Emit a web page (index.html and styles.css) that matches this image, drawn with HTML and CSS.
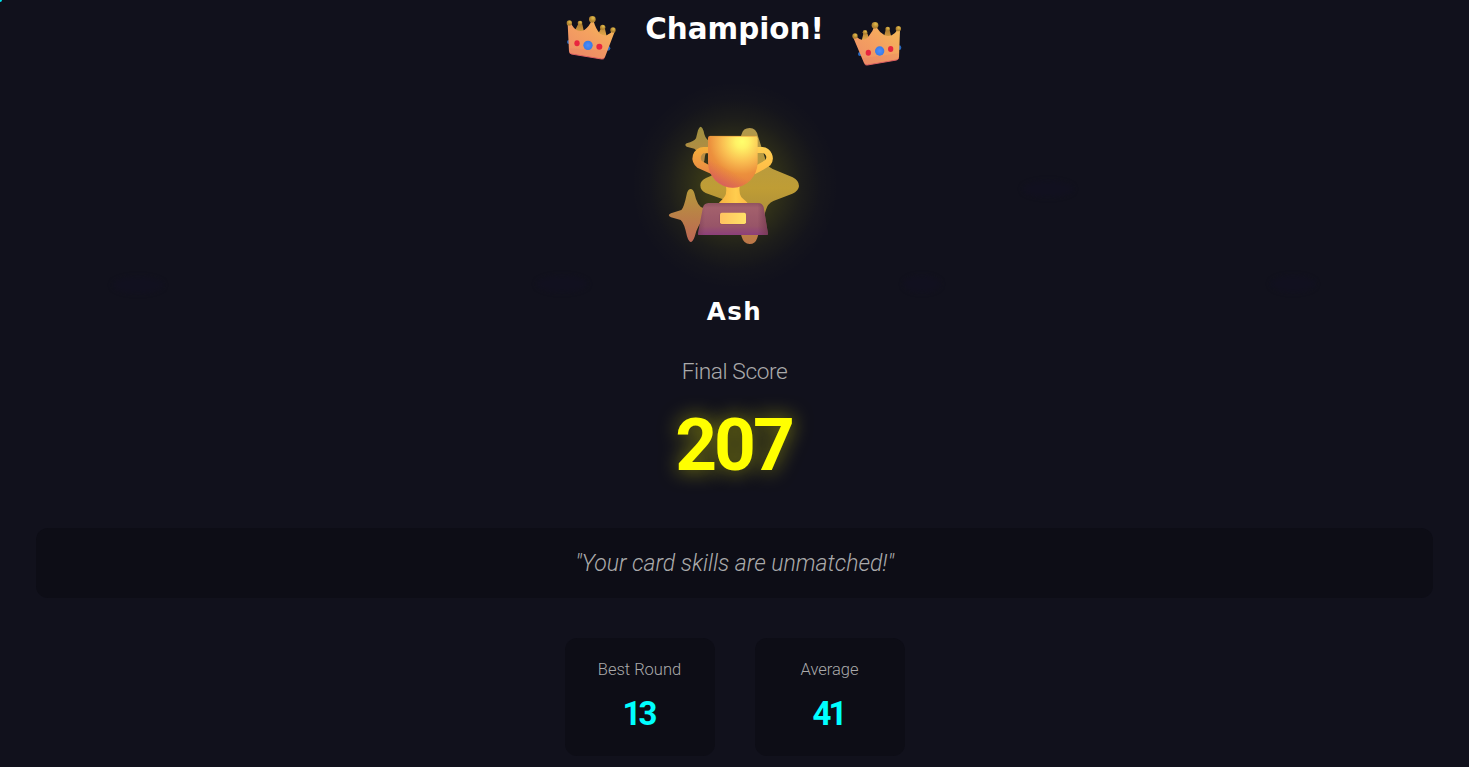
FILE: index.html
```html
<!DOCTYPE html>
<html lang="en">
<head>
<meta charset="utf-8">
<title>Champion!</title>
<link rel="stylesheet" href="styles.css">
</head>
<body>
<svg class="defs" width="0" height="0" aria-hidden="true">
  <defs>
    <linearGradient id="gold" x1="0" y1="1" x2="1" y2="0"><stop offset="0" stop-color="#ee8c66"/><stop offset=".55" stop-color="#f4a160"/><stop offset="1" stop-color="#f5bb57"/></linearGradient>
    <linearGradient id="rim" x1="0" y1="0" x2="-.15" y2="1"><stop offset=".86" stop-color="#e46361" stop-opacity="0"/><stop offset="1" stop-color="#dc5668"/></linearGradient>
    <radialGradient id="ball" cx=".6" cy=".3"><stop offset="0" stop-color="#e2bd4b"/><stop offset="1" stop-color="#b18331"/></radialGradient>
    <radialGradient id="blue"><stop offset="0" stop-color="#4b8dfc"/><stop offset="1" stop-color="#387be6"/></radialGradient>
    <linearGradient id="prong" x1="0" y1="0" x2="0" y2="1"><stop offset="0" stop-color="#a9792e"/><stop offset="1" stop-color="#eeb150"/></linearGradient>
  </defs>
</svg>
<i class="spark"></i>
<i class="ghost g1"></i><i class="ghost g2"></i><i class="ghost g3"></i><i class="ghost g4"></i><i class="ghost g5"></i>
<main class="page">
  <header class="header">
    <svg class="crown" viewBox="0 0 225 195">
      <circle cx="42" cy="111" r="6" fill="#2667bf"/><circle cx="159" cy="130" r="7" fill="#2667bf"/>
      <path d="M70 56L82 58L89 90L58 80ZM138 70L150 72L156 98L127 92Z" fill="url(#prong)"/>
      <path d="M38 56L48 56Q56 70 66 76Q79 81 88 75Q104 63 109 48L116 49Q122 72 135 86Q144 92 155 91Q167 86 172 78L179 80L150 156Q147 163 140 162L49 147Q42 146 42 139Z" fill="url(#gold)"/>
      <path d="M41 130L158 136L150 156Q147 163 140 162L49 147Q42 146 42 139Z" fill="#d9596a" opacity=".12"/>
      <path d="M44 144L49 147L140 162Q146 163 149 158" fill="none" stroke="#dc5f62" stroke-width="3"/>
      <g fill="url(#ball)"><circle cx="43" cy="54" r="8"/><circle cx="75" cy="54" r="7"/><circle cx="112" cy="43" r="10"/><circle cx="143" cy="67" r="8"/><circle cx="174" cy="75" r="8"/></g>
      <ellipse cx="66" cy="115" rx="8" ry="9" fill="#e8263f"/><circle cx="99" cy="121" r="14" fill="url(#blue)"/><ellipse cx="133" cy="125" rx="9" ry="9" fill="#e8263f"/>
    </svg>
    <h1 class="title">Champion!</h1>
    <svg class="crown" viewBox="0 0 225 195">
      <circle cx="60" cy="147" r="6" fill="#2667bf"/><circle cx="177" cy="128" r="7" fill="#2667bf"/>
      <path d="M70 86L82 85L91 110L65 107ZM137 75L149 76L154 97L132 95Z" fill="url(#prong)"/>
      <path d="M40 98L49 95Q56 102 68 105Q80 104 86 94Q99 79 102 66L109 66Q118 82 134 91Q144 95 155 91Q167 84 172 75L180 76L177 157Q176 163 170 165L82 180Q75 181 72 174Z" fill="url(#gold)"/>
      <path d="M66 160L177 145L177 157Q176 163 170 165L82 180Q75 181 72 174Z" fill="#d9596a" opacity=".12"/>
      <path d="M74 177Q77 181 82 180L170 165Q174 164 176 160" fill="none" stroke="#dc5f62" stroke-width="3"/>
      <g fill="url(#ball)"><circle cx="45" cy="93" r="8"/><circle cx="75" cy="82" r="7"/><circle cx="105" cy="61" r="10"/><circle cx="143" cy="72" r="7"/><circle cx="175" cy="71" r="8"/></g>
      <ellipse cx="85" cy="143" rx="8" ry="9" fill="#e8263f"/><circle cx="119" cy="138" r="14" fill="url(#blue)"/><ellipse cx="152" cy="132" rx="8" ry="9" fill="#e8263f"/>
    </svg>
  </header>
  <div class="trophy-wrap">
    <svg class="trophy" viewBox="60 90 450 390">
      <defs>
        <radialGradient id="cup" gradientUnits="userSpaceOnUse" cx="306" cy="155" r="130"><stop offset="0" stop-color="#ffff6c"/><stop offset=".15" stop-color="#fff266"/><stop offset=".45" stop-color="#fac052"/><stop offset=".75" stop-color="#ec903d"/><stop offset="1" stop-color="#e7813e"/></radialGradient>
        <linearGradient id="cupBottom" gradientUnits="userSpaceOnUse" x1="285" y1="225" x2="245" y2="297"><stop offset=".25" stop-color="#dc6253" stop-opacity="0"/><stop offset="1" stop-color="#cf526c" stop-opacity=".85"/></linearGradient>
        <linearGradient id="star" x1="0" y1="0" x2="0" y2="1"><stop offset="0" stop-color="#b1984b"/><stop offset=".52" stop-color="#bf9d35"/><stop offset=".72" stop-color="#b09039"/><stop offset="1" stop-color="#bd7649"/></linearGradient>
        <linearGradient id="spark" x1="0" y1="0" x2="0" y2="1"><stop offset="0" stop-color="#b7993b"/><stop offset="1" stop-color="#bc6654"/></linearGradient>
        <linearGradient id="spark2" x1="0" y1="0" x2="0" y2="1"><stop offset="0" stop-color="#9e903f"/><stop offset="1" stop-color="#bd8b45"/></linearGradient>
        <linearGradient id="hl" x1="0" y1="0" x2="0" y2="1"><stop offset="0" stop-color="#f5b03a"/><stop offset="1" stop-color="#e98744"/></linearGradient>
        <linearGradient id="hr" x1="0" y1="0" x2="0" y2="1"><stop offset="0" stop-color="#ffd052"/><stop offset="1" stop-color="#ffb944"/></linearGradient>
        <linearGradient id="stem" x1="0" y1="0" x2="1" y2="0"><stop offset="0" stop-color="#f5ad3d"/><stop offset=".6" stop-color="#ffcd4e"/><stop offset="1" stop-color="#ffb742"/></linearGradient>
        <linearGradient id="base" x1="0" y1="0" x2="0" y2="1"><stop offset="0" stop-color="#905260"/><stop offset=".15" stop-color="#a3606c"/><stop offset=".72" stop-color="#985568"/><stop offset="1" stop-color="#8c3f7a"/></linearGradient>
        <linearGradient id="side" x1="0" y1="0" x2="1" y2="0"><stop offset="0" stop-color="#74394f" stop-opacity=".5"/><stop offset=".1" stop-color="#74394f" stop-opacity="0"/><stop offset=".85" stop-color="#74394f" stop-opacity="0"/><stop offset="1" stop-color="#74394f" stop-opacity=".8"/></linearGradient>
        <linearGradient id="plate" x1="0" y1="0" x2="1" y2="0"><stop offset="0" stop-color="#ffc260"/><stop offset="1" stop-color="#ffe167"/></linearGradient>
      </defs>
      <path d="M305 132Q309 114 329 114Q349 114 354 139L380 220Q386 232 398 237L458 262Q477 272 477 288Q476 303 457 311L400 333Q383 340 377 362L352 443Q346 462 329 462Q311 461 305 440L278 352Q272 336 255 330L197 309Q181 301 181 286Q181 272 198 264L254 240Q270 232 276 216Z" fill="url(#star)"/>
      <path d="M174 121Q178 110 182 110Q187 111 191 124Q194 145 207 153V177Q195 183 193 212Q188 226 181 222Q177 184 163 176L140 170Q132 165 140 160Q163 154 168 145Z" fill="url(#spark2)"/>
      <path d="M141 309Q145 297 152 297Q159 297 163 309Q172 351 190 354V390Q173 404 164 440Q158 456 152 456Q146 455 141 439Q133 399 122 390L93 382Q80 376 93 370L124 360Q132 353 141 309Z" fill="url(#spark)"/>
      <path d="M205 171H191A34 34 0 0 0 172 233L214 252V229L185 213A18 18 0 0 1 190 190H205Z" fill="url(#hl)"/>
      <path d="M351 171H367A34 34 0 0 1 391 226Q370 240 344 253V229L375 211A13 13 0 0 0 367 189H351Z" fill="url(#hr)"/>
      <path d="M258 288H299Q295 317 310 327Q324 337 326 347H230Q237 337 249 326Q262 315 258 288Z" fill="url(#stem)"/>
      <path d="M210 138H346Q353 138 353 145V216A74 77 0 0 1 204 216V144Q204 138 210 138Z" fill="url(#cup)"/>
      <path d="M204 210H353V216A74 77 0 0 1 204 216Z" fill="url(#cupBottom)"/>
      <path d="M209 139H347" stroke="#e79a3b" stroke-width="2"/>
      <path d="M205 339H354Q367 339 371 352L384 431Q384 435 380 435H177Q173 435 174 430L189 352Q192 340 205 339Z" fill="url(#base)"/>
      <path d="M205 339H354Q367 339 371 352L384 431Q384 435 380 435H177Q173 435 174 430L189 352Q192 340 205 339Z" fill="url(#side)"/>
      <rect x="239" y="369" width="79" height="34" rx="5" fill="#84435c"/>
      <rect x="240" y="368" width="78" height="34" rx="5" fill="url(#plate)"/>
    </svg>
  </div>
  <h2 class="name">Ash</h2>
  <p class="label">Final Score</p>
  <p class="score">207</p>
  <p class="quote"><span>"Your card skills are unmatched!"</span></p>
  <section class="stats">
    <div class="stat"><span class="stat-label">Best Round</span><strong class="stat-value">13</strong></div>
    <div class="stat"><span class="stat-label">Average</span><strong class="stat-value">41</strong></div>
  </section>
</main>
</body>
</html>
```
FILE: styles.css
```css
* { box-sizing: border-box; }
body { margin: 0; height: 767px; overflow: hidden; background: #11111c; color: #fff; font-family: Roboto, sans-serif; }
h1, h2, p { margin: 0; font-weight: 400; white-space: nowrap; }
.defs { position: absolute; }
.spark { position: absolute; left: 0; top: 0; width: 2px; height: 2px; border-radius: 0 0 2px 0; background: #00e5ee; }
.ghost { position: absolute; width: 52px; height: 18px; border-radius: 50%; background: rgba(18, 16, 34, .5); filter: blur(2px); }
.g1 { left: 112px; top: 276px; }
.g2 { left: 536px; top: 275px; }
.g3 { left: 903px; top: 275px; width: 38px; }
.g4 { left: 1270px; top: 275px; width: 46px; }
.g5 { left: 1022px; top: 180px; }
.page { position: relative; width: 1469px; height: 767px; padding: 5px 36px 0; display: flex; flex-direction: column; align-items: center; }
.header { display: flex; width: 360px; height: 65px; justify-content: space-between; }
.crown { width: 75px; height: 65px; flex: none; }
.title { width: 210px; height: 46px; text-align: center; font: bold 29.4px/48px "DejaVu Sans", sans-serif; display: flex; justify-content: center; }
.trophy-wrap { width: 210px; height: 210px; margin-top: 10px; display: flex; justify-content: center; align-items: flex-start; padding-top: 40px; background: radial-gradient(circle, rgba(255, 255, 0, .2) 0, rgba(255, 255, 0, .17) 20%, rgba(255, 255, 0, .11) 32%, rgba(255, 255, 0, .05) 45%, rgba(255, 255, 0, .015) 57%, transparent 70%); }
.trophy { width: 150px; height: 130px; }
.name { height: 40px; margin-top: 2px; font: bold 24.5px/40px "DejaVu Sans", sans-serif; letter-spacing: 1.5px; }
.label { height: 30px; margin-top: 25px; font-size: 22.7px; line-height: 30px; font-weight: 300; letter-spacing: -.4px; color: #aaaaab; }
.score { height: 84px; margin-top: 16px; font-size: 73px; line-height: 84px; font-weight: 700; letter-spacing: -3px; padding-right: 2px; color: #ff0; text-shadow: 0 0 20px rgba(255, 255, 0, .5); }
.quote { width: 100%; height: 70px; margin-top: 41px; border-radius: 12px; background: #0d0d16; text-align: center; font-size: 23px; line-height: 71px; font-style: italic; font-weight: 300; color: #aaaaab; }
.stats { display: flex; gap: 40px; margin-top: 40px; }
.stat { width: 150px; height: 118px; border-radius: 12px; background: #0d0d16; display: flex; flex-direction: column; align-items: center; padding-top: 20px; }
.stat-label { height: 24px; font-size: 16.5px; line-height: 24px; font-weight: 300; color: #aaaaab; }
.stat-value { height: 40px; margin-top: 12px; font-size: 33px; line-height: 40px; letter-spacing: -3px; padding-right: 2px; color: #0ff; }
```
